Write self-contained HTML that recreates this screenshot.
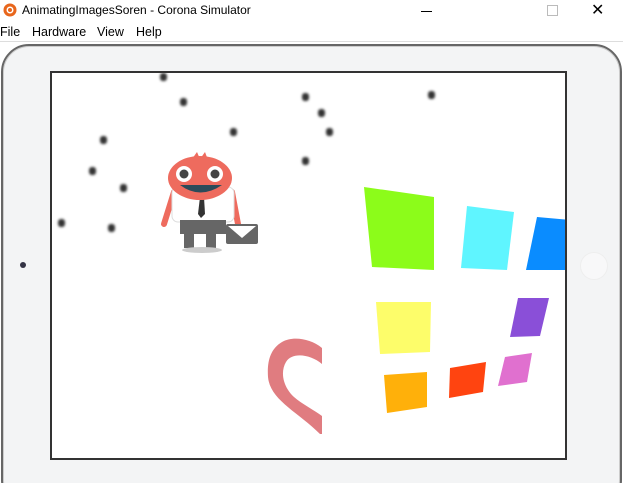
<!DOCTYPE html>
<html><head><style>
html,body{margin:0;width:623px;height:483px;overflow:hidden}
body{background:#fff;font-family:"Liberation Sans",sans-serif;position:relative}
.wrap{position:absolute;left:0;top:0;width:623px;height:483px;overflow:hidden}
.t{position:absolute;left:22px;top:3px;font-size:12px;color:#000}
.m{position:absolute;top:25px;font-size:12.5px;color:#000}
.frame{position:absolute;left:1px;top:44px;width:617px;height:460px;border:2px solid #666;border-radius:28px;background:#f3f4f5;box-shadow:inset 0 0 0 1px #ccc}
.scr{position:absolute;left:50px;top:71px;width:513px;height:385px;border:2px solid #333;background:#fff;overflow:hidden}
.b{position:absolute;width:7px;height:8px;background:#333;border-radius:40%;filter:blur(1.3px)}
</style></head><body><div class="wrap">
<svg style="position:absolute;left:3px;top:3px" width="14" height="14"><circle cx="7" cy="7" r="6.5" fill="#e8661c"/><circle cx="7" cy="7" r="3.5" fill="#fff"/><circle cx="7" cy="7" r="2" fill="#e8661c"/></svg>
<div class="t">AnimatingImagesSoren - Corona Simulator</div>
<div style="position:absolute;left:421px;top:11px;width:11px;height:1px;background:#000"></div>
<div style="position:absolute;left:547px;top:5px;width:9px;height:9px;border:1px solid #bbb"></div>
<div style="position:absolute;left:591px;top:0px;font-size:16px">✕</div>
<div class="m" style="left:0">File</div><div class="m" style="left:32px">Hardware</div><div class="m" style="left:97px">View</div><div class="m" style="left:136px">Help</div>
<div style="position:absolute;left:0;top:41px;width:623px;height:1px;background:#ddd"></div>
<div class="frame"></div>
<div style="position:absolute;left:20px;top:262px;width:6px;height:6px;border-radius:50%;background:#334"></div>
<div style="position:absolute;left:580px;top:252px;width:26px;height:26px;border-radius:50%;background:#f8f8f9;border:1px solid #eee"></div>
<div class="scr">
<svg width="513" height="385" style="position:absolute;left:-50px;top:-71px;overflow:visible">
<polygon points="362,185 432,195 432,268 370,265" fill="#8cfc1a"/>
<polygon points="465,204 512,210 505,268 459,266" fill="#5ff5ff"/>
<polygon points="535,215 568,218 568,268 524,268" fill="#0a8cff"/>
<polygon points="374,300 429,300 428,350 378,352" fill="#fdfd6a"/>
<polygon points="516,296 547,296 538,334 508,335" fill="#8a4fd8"/>
<polygon points="382,373 425,370 425,405 385,411" fill="#ffb00a"/>
<polygon points="448,366 484,360 481,390 447,396" fill="#ff4410"/>
<polygon points="503,355 530,351 525,380 496,384" fill="#e070cf"/>
<path fill-rule="evenodd" d="M320,346 C308,336 290,334 280,340 C268,347 265,360 266,375 C268,398 296,410 318,432 L320,432 Z M320,362 C308,352 290,350 284,360 C278,370 281,385 292,395 C300,402 312,408 320,414 Z" fill="#e07c80"/>
<line x1="172" y1="190" x2="162" y2="222" stroke="#ee6b5e" stroke-width="6" stroke-linecap="round"/>
<line x1="230" y1="190" x2="236" y2="222" stroke="#ee6b5e" stroke-width="6" stroke-linecap="round"/>
<rect x="170" y="185" width="62" height="35" rx="6" fill="#fff" stroke="#ddd"/>
<rect x="178" y="218" width="46" height="14" fill="#666"/>
<rect x="182" y="230" width="10" height="16" fill="#666"/><rect x="204" y="230" width="10" height="16" fill="#666"/>
<ellipse cx="200" cy="248" rx="20" ry="3" fill="#ccc"/>
<polygon points="198,195 202,195 203,212 199,216 196,212" fill="#333"/>
<path d="M190,157 L195,150 L198,157 L203,150 L206,158 Z" fill="#ee6b5e"/>
<ellipse cx="198" cy="176" rx="32" ry="22" fill="#ee6b5e"/>
<circle cx="182" cy="172" r="8" fill="#fff"/><circle cx="182" cy="172" r="4.5" fill="#444"/>
<circle cx="213" cy="172" r="8" fill="#fff"/><circle cx="213" cy="172" r="4.5" fill="#444"/>
<path d="M178,183 Q198,198 220,183 Z" fill="#2b4b5a"/>
<rect x="224" y="222" width="32" height="20" rx="2" fill="#666"/><polygon points="226,224 240,236 254,224" fill="#fff"/>
</svg>
<div class="b" style="left:108px;top:0px"></div>
<div class="b" style="left:128px;top:25px"></div>
<div class="b" style="left:250px;top:20px"></div>
<div class="b" style="left:266px;top:36px"></div>
<div class="b" style="left:274px;top:55px"></div>
<div class="b" style="left:376px;top:18px"></div>
<div class="b" style="left:178px;top:55px"></div>
<div class="b" style="left:250px;top:84px"></div>
<div class="b" style="left:48px;top:63px"></div>
<div class="b" style="left:37px;top:94px"></div>
<div class="b" style="left:68px;top:111px"></div>
<div class="b" style="left:56px;top:151px"></div>
<div class="b" style="left:6px;top:146px"></div>
</div>
</div></body></html>
